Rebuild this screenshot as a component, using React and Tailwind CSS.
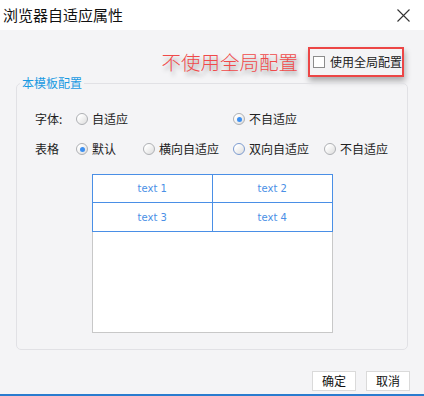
import React from "react";

const CN = { fontFamily: '"Microsoft YaHei","Noto Sans CJK SC",sans-serif' };

function Radio({ checked, hover }) {
  return (
    <span
      className={`relative inline-flex items-center justify-center w-[12px] h-[12px] rounded-full border shrink-0 bg-[linear-gradient(135deg,#ffffff_20%,#dcdcdc_100%)] ${
        hover ? "border-[#7c9bd0]" : "border-[#aeb0b4]"
      }`}
    >
      {checked && <span className="w-[5px] h-[5px] rounded-full bg-[#3d8ff0]" />}
    </span>
  );
}

function Opt({ label, checked, hover }) {
  return (
    <div className="flex items-center">
      <Radio checked={checked} hover={hover} />
      <span className="ml-[4px] text-[12px] leading-[18px] text-[#222]">{label}</span>
    </div>
  );
}

export default function App() {
  return (
    <div className="w-[424px] h-[396px] flex flex-col bg-white overflow-hidden" style={CN}>
      <div className="h-[30px] bg-white flex items-center justify-between pl-[3px] pr-[14px]">
        <span className="text-[15px] leading-[20px] text-[#111]">浏览器自适应属性</span>
        <svg width="13" height="13" viewBox="0 0 13 13" className="text-[#333]">
          <path d="M0.5 0.5 L12.5 12.5 M12.5 0.5 L0.5 12.5" stroke="currentColor" strokeWidth="1.1" fill="none" />
        </svg>
      </div>
      <div className="flex-1 bg-[#f4f4f6] flex flex-col pt-[17px]">
        <div className="h-[30px] flex items-center justify-end pr-[20px]">
          <span className="text-[19.5px] leading-[24px] font-light text-[#f04a4a] [text-shadow:2px_4px_4px_rgba(0,0,0,0.35)] mr-[10px]">
            不使用全局配置
          </span>
          <div className="w-[96px] h-[30px] border-2 border-[#ec4646] flex items-center pl-[3px] shadow-[1px_4px_6px_rgba(0,0,0,0.3)]">
            <span className="w-[12px] h-[12px] border border-[#8c8c8c] bg-white shrink-0" />
            <span className="ml-[5px] text-[12px] leading-[16px] text-[#222]">使用全局配置</span>
          </div>
        </div>
        <fieldset className="mx-[16px] mt-[-1px] border border-[#e1e1e5] rounded-[5px] pl-[18px] pt-[20px] pb-[16px]">
          <legend className="ml-[-15px] px-[2px] text-[12px] leading-[14px] text-[#1a9ae2]">本模板配置</legend>
          <div className="grid grid-cols-[41px_67px_90px_91px_auto] gap-y-[12px]">
            <div className="h-[18px] text-[12px] leading-[18px] text-[#222]">字体:</div>
            <div className="col-span-2 h-[18px]"><Opt label="自适应" /></div>
            <div className="col-span-2 h-[18px]"><Opt label="不自适应" checked /></div>
            <div className="h-[18px] text-[12px] leading-[18px] text-[#222]">表格</div>
            <Opt label="默认" checked />
            <Opt label="横向自适应" />
            <Opt label="双向自适应" hover />
            <Opt label="不自适应" />
          </div>
          <div className="ml-[57px] mt-[16px] w-[241px] h-[159px] bg-white border border-[#c8c8c8] border-t-0 flex flex-col">
            <div
              className="grid grid-cols-2 border border-[#4a8fe6] ml-[-1px] mr-[-1px] text-[10px] text-[#4a8fe6]"
              style={{ fontFamily: '"DejaVu Sans",sans-serif' }}
            >
              <div className="h-[28px] flex items-center justify-center border-r border-b border-[#4a8fe6]">text 1</div>
              <div className="h-[28px] flex items-center justify-center border-b border-[#4a8fe6]">text 2</div>
              <div className="h-[28px] flex items-center justify-center border-r border-[#4a8fe6]">text 3</div>
              <div className="h-[28px] flex items-center justify-center">text 4</div>
            </div>
          </div>
        </fieldset>
        <div className="mt-[21px] flex justify-end pr-[14px] gap-[10px]">
          <button className="w-[44px] h-[20px] bg-white border border-[#dadada] text-[12px] leading-[18px] text-[#111]">确定</button>
          <button className="w-[44px] h-[20px] bg-white border border-[#dadada] text-[12px] leading-[18px] text-[#111]">取消</button>
        </div>
        <div className="flex-1" />
        <div className="h-[2px] bg-[#2a7ccf]" />
      </div>
    </div>
  );
}
